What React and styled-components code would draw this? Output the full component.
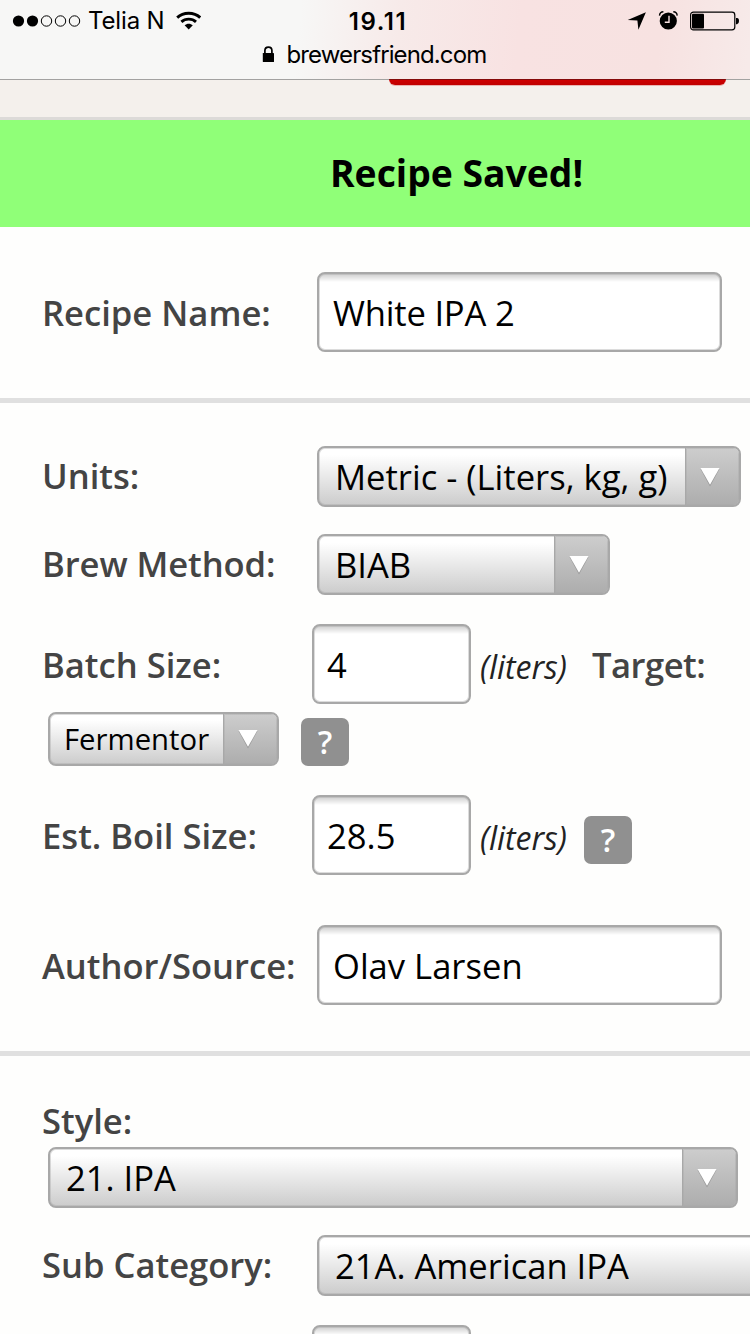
import React from "react";
import styled, { createGlobalStyle } from "styled-components";

const Global = createGlobalStyle`
  *, *::before, *::after { box-sizing: border-box; }
  body { margin: 0; background: #fefefd; font-family: "Open Sans", sans-serif; }
`;

const Screen = styled.div`
  width: 750px;
  height: 1334px;
  overflow: hidden;
  display: flex;
  flex-direction: column;
  background: #fefefd;
`;

const BrowserBar = styled.header`
  flex: none;
  height: 80px;
  border-bottom: 1px solid #a3a2a1;
  background: linear-gradient(96deg, #f7f7f6 0, #f7f7f6 300px, #f7eae9 400px, #f8e2e2 520px, #f7e2e1 660px, #f7eae9 750px);
  font-family: Inter, sans-serif;
  color: #000;
`;

const StatusRow = styled.div`
  display: grid;
  grid-template-columns: 1fr auto 1fr;
  align-items: center;
  height: 41px;
  padding: 0 10px 0 12px;
`;

const Carrier = styled.div`
  display: flex;
  align-items: center;
  font-size: 24px;
  letter-spacing: -0.15px;
  span { margin: 0 10px 0 7px; }
`;

const Clock = styled.div`
  padding: 1px 0 0 4px;
  font-size: 24px;
  font-weight: 600;
  letter-spacing: 1.6px;
`;

const Indicators = styled.div`
  display: flex;
  align-items: center;
  justify-content: flex-end;
  gap: 12px;
`;

const AddressRow = styled.div`
  display: flex;
  align-items: center;
  gap: 12.5px;
  height: 27px;
  padding-left: 262px;
  font-size: 24px;
  letter-spacing: -0.88px;
`;

const SiteHeader = styled.div`
  flex: none;
  height: 40px;
  background: #f4f0ec;
  border-bottom: 3px solid #dcdad8;
`;

const RedTab = styled.div`
  position: relative;
  width: 337px;
  height: 6px;
  margin: -1px 0 0 389px;
  border-top: 1px solid #850a0a;
  border-radius: 0 0 7px 7px;
  background: linear-gradient(#ce0000, #c00000);
  box-shadow: 0 1px 0 #e9b5b2;
`;

const Banner = styled.div`
  flex: none;
  height: 107px;
  padding-left: 330px;
  background: #90ff78;
  font-size: 37.3px;
  font-weight: 700;
  line-height: 106px;
  color: #000;
`;

const Section = styled.section`
  flex: none;
  height: ${p => p.$height}px;
  padding: ${p => p.$top}px 0 0 42px;
  border-bottom: ${p => (p.$last ? 0 : 5)}px solid #e0e0e0;
`;

const Row = styled.div`
  display: flex;
  align-items: center;
  height: ${p => p.$height}px;
  margin-bottom: ${p => p.$after || 0}px;
  padding-left: ${p => p.$indent || 0}px;
`;

const Label = styled.label`
  flex: none;
  width: ${p => p.$width || 275}px;
  padding-top: ${p => p.$drop || 0}px;
  padding-bottom: ${p => p.$lift || 0}px;
  font-size: 34.6px;
  font-weight: 600;
  line-height: 46px;
  letter-spacing: ${p => p.$tracking || 0}px;
  color: #444;
  white-space: nowrap;
`;

const Field = styled.input`
  flex: none;
  display: block;
  width: ${p => p.$width}px;
  height: 80px;
  padding: 0 0 0 ${p => (p.$short ? 13 : 14)}px;
  border: 2px solid #a8a8a8;
  border-radius: 8px;
  outline: 0;
  background: #fff linear-gradient(#cfcfcf, #fff) 0 0 / 100% 8px no-repeat;
  box-shadow: inset 0 0 0 1px rgba(168, 168, 168, 0.4);
  font: 34.6px "Open Sans", sans-serif;
  letter-spacing: ${p => p.$tracking || 0}px;
  color: #000;
`;

const SelectBox = styled.div`
  flex: none;
  display: flex;
  width: ${p => p.$width}px;
  height: ${p => (p.$small ? 54 : 61)}px;
  border: 2px solid #a8a8a8;
  border-radius: 8px;
  overflow: hidden;
  background: linear-gradient(#fff 12%, #ccc);
  box-shadow: inset 0 0 0 1px rgba(168, 168, 168, 0.4);
  font-size: ${p => (p.$small ? 29.3 : 34.6)}px;
  line-height: ${p => (p.$small ? 50 : 57)}px;
  color: #000;
  white-space: nowrap;
`;

const SelectText = styled.span`
  flex: 1;
  padding-left: ${p => (p.$small ? 14 : 16)}px;
`;

const SelectArrow = styled.span`
  flex: none;
  display: flex;
  align-items: center;
  justify-content: center;
  width: 54px;
  padding: 0 5px 0 0;
  border-left: 1px solid #a8a8a8;
  background: linear-gradient(#cdcdcd, #adadad);
  box-shadow: inset 0 0 0 1px rgba(168, 168, 168, 0.4);
`;

const Unit = styled.em`
  flex: none;
  width: 112px;
  margin-left: 9px;
  padding-top: 6px;
  font-size: 32px;
  line-height: 44px;
  letter-spacing: -0.05px;
  color: #222;
`;

const Help = styled.button`
  flex: none;
  width: 48px;
  height: 48px;
  margin: ${p => p.$offset || 0}px 0 0 ${p => p.$left}px;
  padding: 0 0 1px;
  border: 0;
  border-radius: 7px;
  background: #909090;
  font: 600 32px/47px "Open Sans", sans-serif;
  color: #fff;
`;

function Select({ width, small, children }) {
  return (
    <SelectBox $width={width} $small={small}>
      <SelectText $small={small}>{children}</SelectText>
      <SelectArrow>
        <svg width="20" height="20" viewBox="0 0 20 20">
          <path d="M0.5 2H19.5L10 19.5Z" fill="#999" />
          <path d="M0.5 1H19.5L10 17.8Z" fill="#fff" />
        </svg>
      </SelectArrow>
    </SelectBox>
  );
}

const SignalDots = () => (
  <svg width="69" height="14" viewBox="0 0 69 14">
    {[0, 1, 2, 3, 4].map(i => (
      <circle key={i} cx={6.5 + i * 14} cy="7" r={i < 2 ? 5.6 : 5.2} fill={i < 2 ? "#000" : "none"} stroke={i < 2 ? "none" : "#000"} strokeWidth="1" />
    ))}
  </svg>
);

const Wifi = () => (
  <svg width="26" height="20" viewBox="0 0 26 20" fill="none" stroke="#000" strokeWidth="2.9">
    <path d="M2.2 6.6C8.4 0.8 19 0.8 25.2 6.6" />
    <path d="M6.4 10.9C10.4 7.2 17 7.2 21 10.9" />
    <path d="M13.7 18.4L9.6 14.2C12 12.1 15.4 12.1 17.8 14.2Z" fill="#000" stroke="none" />
  </svg>
);

const LocationIcon = () => (
  <svg width="19" height="18" viewBox="0 0 19 18">
    <path d="M18.9 0.2L11.4 17.7L10.4 8.6L0.7 8Z" fill="#000" />
  </svg>
);

const AlarmIcon = () => (
  <svg width="20" height="19" viewBox="0 0 20 19" fill="none">
    <circle cx="10.3" cy="10" r="8.6" fill="#000" />
    <path d="M1.5 4.6C1.7 2.4 3.2 0.9 5.4 0.8M19.2 4.6C19 2.4 17.5 0.9 15.3 0.8" stroke="#000" strokeWidth="1.4" />
    <path d="M11 4.8V11.2H6.8" stroke="#f8e1e1" strokeWidth="1.4" />
  </svg>
);

const BatteryIcon = () => (
  <svg width="50" height="20" viewBox="0 0 50 20">
    <rect x="0.6" y="1.1" width="44.2" height="17.8" rx="2.8" fill="none" stroke="#000" strokeWidth="1.2" />
    <rect x="2" y="2.7" width="12" height="14.7" rx="1" fill="#000" />
    <path d="M46 7H47Q49 7 49 10T47 13.3H46Z" fill="#000" />
  </svg>
);

const LockIcon = () => (
  <svg width="12" height="17" viewBox="0 0 12 17">
    <rect x="0.8" y="7" width="11.2" height="9" rx="0.6" fill="#000" />
    <path d="M2.9 8V4.6C2.9 0 9.9 0 9.9 4.6V8" fill="none" stroke="#000" strokeWidth="1.7" />
  </svg>
);

export default function App() {
  return (
    <Screen>
      <Global />
      <BrowserBar>
        <StatusRow>
          <Carrier>
            <SignalDots />
            <span>Telia N</span>
            <Wifi />
          </Carrier>
          <Clock>19.11</Clock>
          <Indicators>
            <LocationIcon />
            <AlarmIcon />
            <BatteryIcon />
          </Indicators>
        </StatusRow>
        <AddressRow>
          <LockIcon />
          <span>brewersfriend.com</span>
        </AddressRow>
      </BrowserBar>
      <SiteHeader>
        <RedTab />
      </SiteHeader>
      <Banner>Recipe Saved!</Banner>

      <Section $height={176} $top={45}>
        <Row $height={80}>
          <Label $drop={2}>Recipe Name:</Label>
          <Field $width={405} $tracking={-0.2} defaultValue="White IPA 2" />
        </Row>
      </Section>

      <Section $height={653} $top={43}>
        <Row $height={61} $after={27}>
          <Label $lift={2}>Units:</Label>
          <Select width={424}>Metric - (Liters, kg, g)</Select>
        </Row>
        <Row $height={61} $after={29}>
          <Label $lift={2} $tracking={-0.08}>Brew Method:</Label>
          <Select width={293}>BIAB</Select>
        </Row>
        <Row $height={80} $after={8}>
          <Label $width={270} $drop={2}>Batch Size:</Label>
          <Field $width={159} $short defaultValue="4" />
          <Unit>(liters)</Unit>
          <Label $width={120} $drop={2} $tracking={-0.5}>Target:</Label>
        </Row>
        <Row $height={54} $after={29} $indent={6}>
          <Select width={231} small>Fermentor</Select>
          <Help $left={22} $offset={6}>?</Help>
        </Row>
        <Row $height={80} $after={50}>
          <Label $width={270} $drop={2}>Est. Boil Size:</Label>
          <Field $width={159} $short defaultValue="28.5" />
          <Unit>(liters)</Unit>
          <Help $left={-8} $offset={9}>?</Help>
        </Row>
        <Row $height={80}>
          <Label $drop={2}>Author/Source:</Label>
          <Field $width={405} defaultValue="Olav Larsen" />
        </Row>
      </Section>

      <Section $height={278} $top={40} $last>
        <Row $height={51}>
          <Label $lift={2}>Style:</Label>
        </Row>
        <Row $height={61} $after={27} $indent={6}>
          <Select width={690}>21. IPA</Select>
        </Row>
        <Row $height={61} $after={29}>
          <Label $lift={2}>Sub Category:</Label>
          <Select width={520}>21A. American IPA</Select>
        </Row>
        <Row $height={80} $indent={270}>
          <Field $width={159} />
        </Row>
      </Section>
    </Screen>
  );
}
